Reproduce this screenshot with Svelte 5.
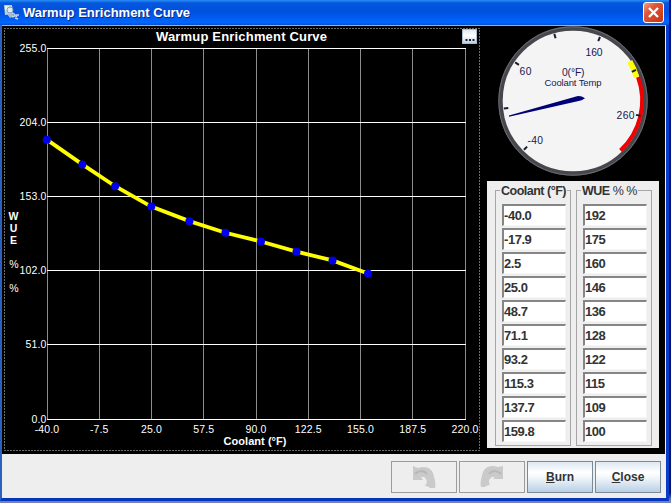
<script>
  const left = 47.5;
  const top = 48.5;
  const right = 465.5;
  const bottom = 419.5;

  const xTicks = [-40, -7.5, 25, 57.5, 90, 122.5, 155, 187.5, 220];
  const yTicks = [255, 204, 153, 102, 51, 0];

  let rows = [
    { temp: "-40.0", wue: "192" },
    { temp: "-17.9", wue: "175" },
    { temp: "2.5", wue: "160" },
    { temp: "25.0", wue: "146" },
    { temp: "48.7", wue: "136" },
    { temp: "71.1", wue: "128" },
    { temp: "93.2", wue: "122" },
    { temp: "115.3", wue: "115" },
    { temp: "137.7", wue: "109" },
    { temp: "159.8", wue: "100" },
  ];

  // data value -> pixel
  const px = (v) => left + ((v + 40) / 260) * (right - left);
  const py = (v) => bottom - (v / 255) * (bottom - top);
  const snap = (v) => Math.floor(v - 0.5) + 0.5;

  $: points = rows.map((r) => ({ x: px(+r.temp) - 0.7, y: py(+r.wue) - 0.5 }));
  $: line = points.map((p) => `${p.x},${p.y}`).join(" ");

  // gauge ticks as [x, y], all pointing to the centre
  const cx = 573;
  const cy = 101;
  const gaugeTicks = [
    [525.7, 148], [506.3, 108.3], [517.3, 63.7], [555, 36.3],
    [599, 39.3], [633.7, 71], [638, 115.3],
  ];
  const tickAngle = (t) => (Math.atan2(t[1] - cy, t[0] - cx) * 180) / Math.PI;
</script>

<div class="desktop">
  <div class="window">
    <div class="titlebar">
      <svg class="app-icon" width="16" height="16" viewBox="0 0 16 16">
        <path d="M1 1h8l1 9-8 1z" fill="#bdd3dc" />
        <path d="M2 2h4v4H2z" fill="#e9f2dc" />
        <circle cx="7" cy="6" r="3" fill="#dfe9f0" stroke="#829fb8" />
        <path d="M4 10l5-1 2 3-4 2z" fill="#a9bccb" />
        <path d="M10 9l4 4M9 13l3-1M13 11l3 0M12 14l3 1" stroke="#b9d7f2" stroke-width="1.5" />
      </svg>
      <span class="caption">Warmup Enrichment Curve</span>
      <button class="x" aria-label="Close window">
        <svg width="21" height="21" viewBox="0 0 21 21">
          <path d="M6 6l9 9M15 6l-9 9" stroke="#fff" stroke-width="2.3" />
        </svg>
      </button>
    </div>

    <div class="content">
      <svg class="chart" width="480" height="428" viewBox="2 26 480 428">
        <rect x="4.5" y="28.5" width="475" height="422" fill="none" stroke="#d8d8d8" stroke-dasharray="1 2" />
        {#each xTicks as t}
          <line x1={snap(px(t))} x2={snap(px(t))} y1={top} y2={bottom} stroke="#8c8c8c" />
          <text class="tick" x={px(t) - 0.5} y="432.5" text-anchor="middle">{t.toFixed(1)}</text>
        {/each}
        {#each yTicks as t}
          <line x1={left - 0.5} x2={right + 0.5} y1={snap(py(t))} y2={snap(py(t))} stroke="#fff" />
          <text class="tick" x="46.5" y={snap(py(t)) + 3.5} text-anchor="end">{t.toFixed(1)}</text>
        {/each}
        <polyline points={line} fill="none" stroke="#ff0" stroke-width="3.8" />
        {#each points as p}
          <circle cx={p.x} cy={p.y} r="4" fill="#00e" />
        {/each}
        <text class="bold" x="156" y="41" font-size="13" textLength="171">Warmup Enrichment Curve</text>
        <text class="bold" x="223.5" y="445" font-size="11" textLength="63">Coolant (°F)</text>
        <text class="bold" font-size="10.5" text-anchor="middle">
          <tspan x="13.5" y="220">W</tspan><tspan x="13.5" y="232">U</tspan><tspan x="13.5" y="244">E</tspan><tspan class="pct" x="14" y="268">%</tspan><tspan class="pct" x="14" y="292">%</tspan>
        </text>
        <rect x="462.5" y="29.5" width="14" height="14" fill="url(#more)" stroke="#a9bccb" />
        <path d="M465.5 40h2M469 40h2M472.5 40h2" stroke="#223" stroke-width="2" />
        <defs>
          <linearGradient id="more" x2="0" y2="1">
            <stop offset="0" stop-color="#dce8f2" />
            <stop offset=".45" stop-color="#fff" />
            <stop offset="1" stop-color="#b8cfe5" />
          </linearGradient>
        </defs>
      </svg>

      <div class="side">
        <svg class="gauge" width="184" height="155" viewBox="482 26 184 155">
          <circle {cx} {cy} r="72.5" fill="#f4f4f4" stroke="#46464d" stroke-width="4.4" />
          <circle {cx} {cy} r="74.2" fill="none" stroke="#6b6b73" />
          <path d="M638 77A68.5 68.5 0 0 1 620.5 150.5" fill="none" stroke="#f00000" stroke-width="4" />
          <path d="M629.8 61.5A69 69 0 0 1 636.5 77" fill="none" stroke="#ff0" stroke-width="5.5" />
          {#each gaugeTicks as t}
            <rect x={t[0] - 2} y={t[1] - 1} width="4.5" height="2" fill="#1c1c34" transform="rotate({tickAngle(t)} {t[0]} {t[1]})" />
          {/each}
          <path d="M509 116.7L509 115.6L577 96.2Q581 95.5 585 98.2Q582 100.6 577.5 101.2Z" fill="#000078" />
          <g class="dial">
            <text x="519.5" y="75" textLength="12">60</text>
            <text x="585.5" y="56" textLength="17">160</text>
            <text x="616.5" y="118.5" textLength="18">260</text>
            <text x="527.5" y="144" textLength="15.5">-40</text>
            <text x="562" y="76" textLength="22.5">0(°F)</text>
            <text x="544.5" y="86" font-size="9.5" textLength="57">Coolant Temp</text>
          </g>
        </svg>

        <div class="table">
          <fieldset>
            <legend>Coolant (°F)</legend>
            {#each rows as row}
              <input bind:value={row.temp} />
            {/each}
          </fieldset>
          <fieldset>
            <legend>WUE <span class="thin">% %</span></legend>
            {#each rows as row}
              <input bind:value={row.wue} />
            {/each}
          </fieldset>
        </div>
      </div>
    </div>

    <div class="footer">
      <button class="btn disabled" disabled aria-label="Undo">
        <svg width="24" height="24" viewBox="0 0 24 24">
          <path d="M1 1l5 2c9-3 15 1 16 9 1 3 2 8 1 11h-5c-1-1-2-2-5-2 3-4 2-7-1-9l-3 0 2 3H1z" fill="#cacaca" />
          <path d="M3 9c4-4 9-4 12 0" fill="none" stroke="#b8b8b8" stroke-width="2" />
        </svg>
      </button>
      <button class="btn disabled" disabled aria-label="Redo">
        <svg class="flip" width="24" height="24" viewBox="0 0 24 24">
          <path d="M1 1l5 1c9-3 15 1 16 9 1 3 2 8 1 11h-4c-1-1-2-2-5-2 2-4 1-6-2-8l-3 0 2 2H1z" fill="#cacaca" />
          <path d="M3 9c4-4 9-4 12 0" fill="none" stroke="#b8b8b8" stroke-width="2" />
        </svg>
      </button>
      <button class="btn"><span><u>B</u>urn</span></button>
      <button class="btn"><span><u>C</u>lose</span></button>
    </div>
  </div>
</div>

<style>
  :global(body) {
    margin: 0;
    overflow: hidden;
  }

  .desktop {
    width: 671px;
    height: 503px;
    background: linear-gradient(#00138c, #001470 98%, #7580b8 99.5%);
    font-family: "Liberation Sans", Arial, sans-serif;
  }

  .window {
    width: 669px;
    height: 501px;
    box-sizing: border-box;
    border: solid #0a3ccb;
    border-width: 0 3px 3px 2px;
    border-left-color: #2c61c0;
    border-bottom-color: #0634bd;
    background: #eee;
    display: flex;
    flex-direction: column;
  }

  .titlebar {
    height: 25px;
    margin: 0 -3px 0 -2px;
    padding: 0 5px 0 3px;
    box-sizing: border-box;
    display: flex;
    align-items: center;
    flex: none;
    background: linear-gradient(#2b8df5 0, #0457dd 12%, #0050dc 45%, #005cf3 72%, #0066ff 90%, #0650d0 100%);
  }

  .app-icon {
    margin-top: -2px;
  }

  .caption {
    flex: 1;
    margin: -1px 0 0 4px;
    color: #fff;
    font-size: 13px;
    font-weight: bold;
    text-shadow: 1px 1px #0a2a80;
  }

  .x {
    width: 21px;
    height: 21px;
    margin-top: -1px;
    padding: 0;
    border: 1px solid #fff;
    border-radius: 3px;
    background: linear-gradient(135deg, #f0a080, #e0553a 35%, #c8320c);
    display: flex;
    align-items: center;
    justify-content: center;
  }

  .x svg {
    flex: none;
  }

  .content {
    height: 429px;
    flex: none;
    box-sizing: border-box;
    border-top: 1px solid #8db1e8;
    border-right: 1px solid #e8eef8;
    background: #000;
    display: flex;
  }

  .chart,
  .gauge {
    display: block;
    flex: none;
  }

  .tick {
    fill: #fff;
    font-size: 10.5px;
    letter-spacing: 0.15px;
  }

  .bold {
    fill: #fff;
    font-weight: bold;
  }

  .pct {
    font-weight: normal;
  }

  .side {
    width: 182px;
    overflow: hidden;
  }

  .dial {
    fill: #17174f;
    font-size: 10.3px;
  }

  .table {
    width: 172px;
    height: 267px;
    margin-left: 5px;
    padding: 2px 7px 2px 8px;
    box-sizing: border-box;
    background: #eee;
    display: flex;
    gap: 5px;
  }

  fieldset {
    flex: 1;
    min-width: 0;
    height: 263px;
    margin: 0;
    padding: 7px 4px 0 6px;
    box-sizing: border-box;
    border: 1px solid #a5a5a5;
  }

  legend {
    height: 14px;
    margin-left: -2px;
    padding: 0 1px;
    color: #333;
    font-size: 12.5px;
    font-weight: bold;
    line-height: 16px;
    white-space: nowrap;
    letter-spacing: -0.5px;
  }

  .thin {
    font-weight: normal;
  }

  input {
    display: block;
    width: 64px;
    height: 22px;
    margin: 0 0 2px;
    padding: 0;
    box-sizing: border-box;
    border: solid;
    border-width: 2px 1px 1px 2px;
    border-color: #858585 #f6f6f6 #f6f6f6 #858585;
    border-radius: 0;
    background: #fff;
    color: #333;
    font: bold 13px "Liberation Sans", Arial, sans-serif;
    letter-spacing: -0.45px;
    outline: none;
  }

  .footer {
    flex: 1;
    padding: 7px 5px 0 0;
    display: flex;
    justify-content: flex-end;
    gap: 2px;
  }

  .btn {
    width: 66px;
    height: 32px;
    padding: 0;
    border: 1px solid #7a8a99;
    background: linear-gradient(#dde8f3, #fff 35%, #f4f8fb 50%, #b8cfe5);
    color: #333;
    font: bold 12px "Liberation Sans", Arial, sans-serif;
    display: flex;
    align-items: center;
    justify-content: center;
  }

  .disabled {
    border-color: #9c9c9c;
    background: #eee;
  }

  .flip {
    transform: scaleX(-1);
  }
</style>
